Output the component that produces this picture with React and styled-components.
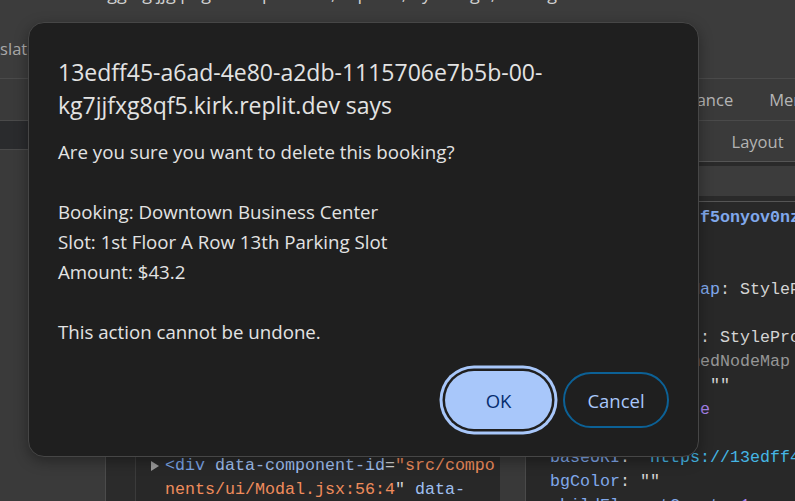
import React from "react";
import styled, { createGlobalStyle } from "styled-components";

const UI = `"Open Sans", "Segoe UI", "Noto Sans", sans-serif`;
const MONO = `"Liberation Mono", "DejaVu Sans Mono", monospace`;

const Global = createGlobalStyle`
  html, body { margin: 0; padding: 0; background: #3a3a3a; overflow: hidden; }
  #root { width: 795px; height: 501px; }
`;

const Screen = styled.div`
  position: relative;
  width: 795px;
  height: 501px;
  overflow: hidden;
  display: flex;
  flex-direction: column;
  background: #3a3a3a;
  font-family: ${UI};
`;

/* ---------- browser top area ---------- */
const TopArea = styled.header`
  height: 78px;
  flex: none;
  background: #3c3c3c;
  border-bottom: 1px solid #4a4a4a;
  display: flex;
  flex-direction: column;
`;
const TitleStrip = styled.div`
  height: 22px;
  flex: none;
  overflow: hidden;
  padding-left: 62px;
  color: #cfcfcf;
  font-size: 18px;
  line-height: 20px;
  white-space: nowrap;
`;
const TitleText = styled.div`
  margin-top: -17px;
`;
const ToolRow = styled.div`
  flex: 1;
  display: flex;
  align-items: center;
  padding-bottom: 4px;
  color: #a9a9a9;
  font-size: 16.5px;
  white-space: nowrap;
`;
const ToolItem = styled.span`
  margin-left: ${(p) => p.$shift}px;
`;

/* ---------- devtools main tabs ---------- */
const MainTabs = styled.nav`
  height: 41px;
  flex: none;
  display: flex;
  align-items: center;
  padding-left: 212px;
  background: #3a3a3a;
  border-bottom: 1px solid #4a4a4a;
  color: #b5b5b5;
  font-size: 16.5px;
  white-space: nowrap;
`;
const Tab = styled.span`
  flex: none;
  padding: 0 18px;
`;

/* ---------- panes ---------- */
const Panes = styled.div`
  flex: 1;
  display: flex;
  min-height: 0;
`;
const LeftPane = styled.section`
  width: 525px;
  flex: none;
  display: flex;
  flex-direction: column;
`;
const LeftToolbar = styled.div`
  height: 28px;
  flex: none;
  background: #2a2b2d;
  border-bottom: 1px solid #4a4a4a;
`;
const LeftBody = styled.div`
  flex: 1;
  display: flex;
  min-height: 0;
`;
const PageStrip = styled.div`
  width: 105px;
  flex: none;
  background: #3a3a3a;
  border-right: 1px solid #4b4b4b;
`;
const Gutter = styled.div`
  width: 29px;
  flex: none;
  background: #2b2b2b;
  border-right: 1px solid #3b3b3b;
`;
const Tree = styled.div`
  flex: 1;
  min-width: 0;
  overflow: hidden;
  background: #282828;
  padding: 16px 0 0 15px;
  font-family: ${MONO};
  font-size: 16.67px;
  line-height: 24px;
  color: #d0d0d0;
`;
const TreeRow = styled.div`
  height: 24px;
  display: flex;
  align-items: center;
  white-space: pre;
  padding-left: ${(p) => (p.$cont ? 14 : 0)}px;
`;
const Arrow = styled.span`
  width: 0;
  height: 0;
  border-left: 8px solid #9a9a9a;
  border-top: 5px solid transparent;
  border-bottom: 5px solid transparent;
  margin-right: 6px;
  flex: none;
`;
const Tag = styled.span`
  color: #7aa3e4;
`;
const Attr = styled.span`
  color: #9fbfef;
`;
const AttrVal = styled.span`
  color: #ef8c5c;
`;
const Plain = styled.span`
  color: #d2d2d2;
`;
const Scrollbar = styled.div`
  width: 25px;
  flex: none;
  background: #393939;
`;

const RightPane = styled.section`
  flex: 1;
  min-width: 0;
  display: flex;
  flex-direction: column;
  border-left: 1px solid #4a4a4a;
`;
const SideTabs = styled.div`
  height: 40px;
  flex: none;
  display: flex;
  align-items: center;
  background: #3a3a3a;
  border-bottom: 1px solid #555;
  color: #b3b3b3;
  font-size: 16.5px;
  white-space: nowrap;
`;
const SideTab = styled.span`
  flex: none;
  padding: 0 16px;
`;
const FilterRow = styled.div`
  flex: none;
  padding: 4px 0 5px;
  background: #2a2a2a;
  border-bottom: 1px solid #555;
`;
const FilterBox = styled.div`
  height: 30px;
  background: #3c3c3c;
`;
const Props = styled.div`
  flex: 1;
  overflow: hidden;
  background: #282828;
  padding: 4px 0 0 24px;
  font-family: ${MONO};
  font-size: 16.67px;
  line-height: 24px;
  white-space: pre;
  color: #d4d4d4;
`;
const PropLine = styled.div`
  height: 24px;
`;
const Name = styled.span`
  color: #80a8ec;
  font-weight: ${(p) => (p.$bold ? 700 : 400)};
`;
const Str = styled.span`
  color: #45b6e4;
`;
const Dim = styled.span`
  color: #969696;
`;
const Bool = styled.span`
  color: #a984f0;
`;

/* ---------- alert dialog ---------- */
const Dialog = styled.div`
  position: absolute;
  left: 28px;
  top: 22px;
  width: 671px;
  height: 435px;
  box-sizing: border-box;
  background: #1f1f1f;
  border: 1px solid #464646;
  border-radius: 16px;
  box-shadow: 0 4px 14px rgba(0, 0, 0, 0.35);
  padding: 33px 29px 27px;
  display: flex;
  flex-direction: column;
  color: #e3e3e3;
  font-family: ${UI};
`;
const DialogTitle = styled.h1`
  margin: 0;
  font-size: 23px;
  font-weight: 400;
  line-height: 33px;
`;
const Message = styled.p`
  margin: 15px 0 0;
  font-size: 18.7px;
  line-height: 30px;
  white-space: pre-line;
`;
const Actions = styled.div`
  margin-top: auto;
  display: flex;
  justify-content: flex-end;
  align-items: center;
  gap: 11px;
`;
const Button = styled.button`
  box-sizing: border-box;
  font-family: ${UI};
  font-size: 18.5px;
  font-weight: 400;
  cursor: pointer;
  width: ${(p) => (p.$primary ? 107 : 106)}px;
  height: ${(p) => (p.$primary ? 58 : 56)}px;
  border-radius: 30px;
  padding: 0;
  background: ${(p) => (p.$primary ? "#a8c7fa" : "transparent")};
  color: ${(p) => (p.$primary ? "#062e6f" : "#a8c7fa")};
  border: ${(p) => (p.$primary ? "none" : "2px solid #0c6196")};
  box-shadow: ${(p) =>
    p.$primary ? "0 0 0 2.5px #1f1f1f, 0 0 0 5.5px #a8c7fa" : "none"};
`;

const hiddenTree = [
  '<!DOCTYPE html>',
  '<html lang="en">',
  '<head>…</head>',
  '<body>',
  '<div id="root">',
  '<div class="min-h-screen">',
  '<header class="sticky">…</header>',
  '<main class="container">',
  '<div class="grid gap-4">…</div>',
  '<div class="space-y-4">…</div>',
  '<div class="fixed inset-0">',
  '<div class="bg-black/50">',
];

export default function App() {
  return (
    <>
      <Global />
      <Screen>
        <TopArea>
          <TitleStrip>
            <TitleText>Debugging jjg page components, top bar, by design, testing</TitleText>
          </TitleStrip>
          <ToolRow>
            <ToolItem $shift={-35}>Translate</ToolItem>
          </ToolRow>
        </TopArea>

        <MainTabs>
          <Tab>Elements</Tab>
          <Tab>Console</Tab>
          <Tab>Sources</Tab>
          <Tab>Network</Tab>
          <Tab>Performance</Tab>
          <Tab>Memory</Tab>
          <Tab>Application</Tab>
        </MainTabs>

        <Panes>
          <LeftPane>
            <LeftToolbar />
            <LeftBody>
              <PageStrip />
              <Gutter />
              <Tree>
                {hiddenTree.map((t, i) => (
                  <TreeRow key={i}>
                    <Tag>{t}</Tag>
                  </TreeRow>
                ))}
                <TreeRow>
                  <Arrow />
                  <Tag>&lt;div</Tag>
                  <Plain> </Plain>
                  <Attr>data-component-id</Attr>
                  <Plain>=</Plain>
                  <AttrVal>"src/compo</AttrVal>
                </TreeRow>
                <TreeRow $cont>
                  <AttrVal>nents/ui/Modal.jsx:56:4</AttrVal>
                  <Plain>" </Plain>
                  <Attr>data-</Attr>
                </TreeRow>
              </Tree>
              <Scrollbar />
            </LeftBody>
          </LeftPane>

          <RightPane>
            <SideTabs>
              <SideTab>Styles</SideTab>
              <SideTab>Computed</SideTab>
              <SideTab>Layout</SideTab>
              <SideTab>Event Listeners</SideTab>
            </SideTabs>
            <FilterRow>
              <FilterBox />
            </FilterRow>
            <Props>
              <PropLine>
                <Name $bold>b-00-kg7jjfxg8.f5onyov0nzq.kirk</Name>
              </PropLine>
              <PropLine>
                <Name>accessKey</Name>: ""
              </PropLine>
              <PropLine>
                <Name>align</Name>: ""
              </PropLine>
              <PropLine>
                <Name>attributeStyleMap</Name>: StylePropertyMap
              </PropLine>
              <PropLine>
                <Name>ariaBusy</Name>: <Dim>null</Dim>
              </PropLine>
              <PropLine>
                <Name>styleProperties</Name>: StylePropertyMap
              </PropLine>
              <PropLine>
                <Name>attributes</Name>: <Dim>NamedNodeMap</Dim>
              </PropLine>
              <PropLine>
                <Name>autocapitalize</Name>: ""
              </PropLine>
              <PropLine>
                <Name>autofocus</Name>: <Bool>false</Bool>
              </PropLine>
              <PropLine>
                <Name>background</Name>: ""
              </PropLine>
              <PropLine>
                <Name>baseURI</Name>: <Str>"https://13edff45-a6ad-4e80</Str>
              </PropLine>
              <PropLine>
                <Name>bgColor</Name>: ""
              </PropLine>
              <PropLine>
                <Name>childElementCount</Name>: <Bool>1</Bool>
              </PropLine>
            </Props>
          </RightPane>
        </Panes>

        <Dialog role="alertdialog">
          <DialogTitle>
            13edff45-a6ad-4e80-a2db-1115706e7b5b-00-
            <br />
            kg7jjfxg8qf5.kirk.replit.dev says
          </DialogTitle>
          <Message>
            {`Are you sure you want to delete this booking?

Booking: Downtown Business Center
Slot: 1st Floor A Row 13th Parking Slot
Amount: $43.2

This action cannot be undone.`}
          </Message>
          <Actions>
            <Button $primary>OK</Button>
            <Button>Cancel</Button>
          </Actions>
        </Dialog>
      </Screen>
    </>
  );
}
